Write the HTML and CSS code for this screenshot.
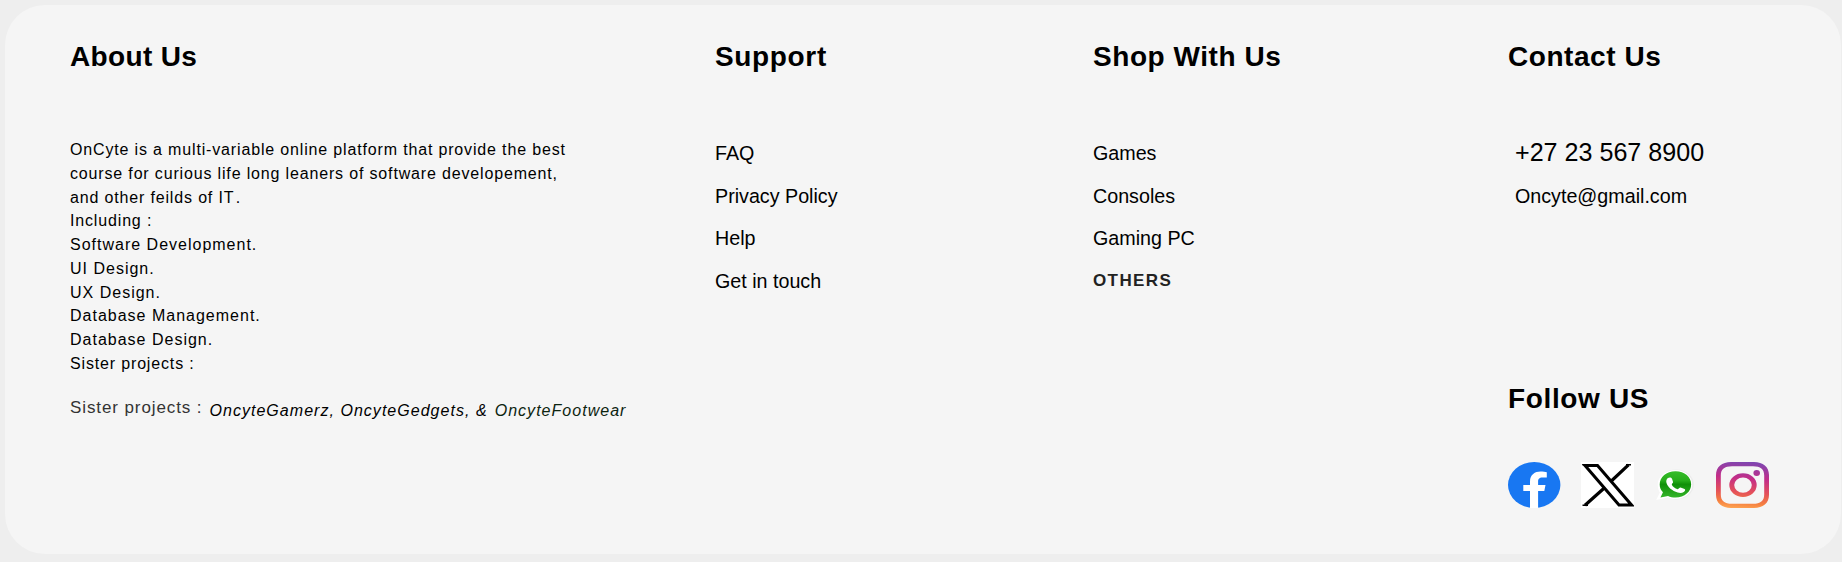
FILE: index.html
```html
<!DOCTYPE html>
<html lang="en">
<head>
<meta charset="utf-8">
<title>Oncyte</title>
<link rel="stylesheet" href="styles.css">
</head>
<body>
<footer class="footer">
  <section class="col">
    <h2 class="title title-about">About Us</h2>
    <p class="about">OnCyte is a multi-variable online platform that provide the best<br>course for curious life long leaners of software developement,<br>and other feilds of IT<span class="stop">.</span><br>Including :<br><span class="topics">Software Development.<br>UI Design.<br>UX Design.<br>Database Management.<br>Database Design.</span><br>Sister projects :</p>
    <div class="sisters">
      <span class="sisters-label">Sister projects :</span>
      <span class="sisters-list"><span>OncyteGamerz,</span><span>OncyteGedgets,</span><span>&amp;</span><span class="footwear">OncyteFootwear</span></span>
    </div>
  </section>
  <section class="col">
    <h2 class="title">Support</h2>
    <ul class="links">
      <li>FAQ</li><li>Privacy Policy</li><li>Help</li><li>Get in touch</li>
    </ul>
  </section>
  <section class="col">
    <h2 class="title title-shop">Shop With Us</h2>
    <ul class="links">
      <li>Games</li><li>Consoles</li><li>Gaming PC</li><li class="others">OTHERS</li>
    </ul>
  </section>
  <section class="col">
    <h2 class="title title-shop">Contact Us</h2>
    <ul class="links contact">
      <li class="phone">+27 23 567 8900</li><li class="mail">Oncyte@gmail.com</li>
    </ul>
    <h2 class="title follow">Follow US</h2>
    <div class="social">
      <svg class="icon" viewBox="0 0 53 46" preserveAspectRatio="none">
        <ellipse cx="26.2" cy="23" rx="26.2" ry="23" fill="#1877f2"/>
        <path d="M22 46V29h-6.700v-6H22v-3.500C22 12.500 27 9.500 32.500 9.500c2.500 0 5 .3 6.300.7v5.300h-4.200c-3.600 0-4.500 1.800-4.500 4V23h7.400l-1.200 6h-6.200v17z" fill="#fff"/>
      </svg>
      <svg class="icon" viewBox="0 0 53 46" preserveAspectRatio="none">
        <path fill="#fff" d="M0 0h53v46H0z"/>
        <path d="M4 3.500h12.500L50.500 43H38z" fill="#fff" stroke="#000" stroke-width="3"/>
        <path d="M47.500 2.800 29.800 19.500M23.300 26 4 43.300" fill="none" stroke="#000" stroke-width="3.200"/>
        <path d="M1.500 2.800H7M45 2.800h5M1.500 43.300H7" stroke="#000" stroke-width="1.500"/>
      </svg>
      <svg class="icon icon-wa" viewBox="1.500 0 39 46" preserveAspectRatio="none">
        <defs><linearGradient id="wa" x1="0" y1="0" x2="0" y2="1"><stop offset="0" stop-color="#35bd29"/><stop offset=".35" stop-color="#27ad1b"/><stop offset=".5" stop-color="#109008"/><stop offset="1" stop-color="#35b52a"/></linearGradient></defs>
        <ellipse cx="22" cy="22.500" rx="16.500" ry="15" fill="#ececec"/>
        <path d="M21.500 8C30.500 8 37 14.500 37 22.500S30.500 37 21.500 37c-2.500 0-5-.5-7-1.500L3.500 38l3.500-7.500c-1.500-2.300-2-5-2-8C5 14.500 12.500 8 21.500 8z" fill="#fff"/>
        <path d="M21.500 9.300C30 9.300 36 15 36 22.300s-6 13.200-14.500 13.200c-2.600 0-5-.6-7-1.600L7.500 35.500l2.300-5.200c-2-2.200-3-4.900-3-7.800C6.800 15 13 9.300 21.500 9.300z" fill="url(#wa)"/>
        <path d="M14.500 16c1.500-1 3.200-.5 3.700.8l1 3.200c.2 1-1.300 1.800-1.200 2.500.5 1.800 3 4 5.500 4.700.9.200 1.500-1.700 2.600-1.600l3.800 1.500c1 .6.500 2.200-.8 3-1.300.9-3.300 1.200-5.600.5-5-1.500-9.500-5.500-10.500-10-.4-2 .2-3.700 1.500-4.600z" fill="#fff"/>
      </svg>
      <svg class="icon" viewBox="0 0 53 46" preserveAspectRatio="none">
        <defs><linearGradient id="ig" x1=".55" y1="0" x2=".45" y2="1"><stop offset="0" stop-color="#7f45b0"/><stop offset=".35" stop-color="#c32d88"/><stop offset=".65" stop-color="#e4505a"/><stop offset=".88" stop-color="#f58040"/><stop offset="1" stop-color="#fda050"/></linearGradient></defs>
        <path fill-rule="evenodd" fill="url(#ig)" d="M15 0h23c9 0 15 5 15 13v20c0 8-6 13-15 13H15C6 46 0 41 0 33V13C0 5 6 0 15 0zm1 4.200C8.500 4.200 4.800 7 4.800 13.500v19c0 6.500 3.700 9.300 11.200 9.300h21c7.500 0 11.200-2.800 11.200-9.300v-19c0-6.500-3.700-9.300-11.200-9.300zM27 11.300a13.700 11.800 0 1 1 0 23.600 13.700 11.800 0 0 1 0-23.600zm0 4.200a8.800 7.600 0 1 0 0 15.200 8.800 7.600 0 0 0 0-15.200zM40.700 8.100a3.300 2.900 0 1 1 0 5.800 3.300 2.900 0 0 1 0-5.800z"/>
      </svg>
    </div>
  </section>
</footer>
</body>
</html>
```
FILE: styles.css
```css
body {
  margin: 0;
  padding: 5px 1px 8px 5px;
  height: 562px;
  box-sizing: border-box;
  background: #eee;
  font-family: Arial, "Liberation Sans", sans-serif;
  color: #000;
}

.footer {
  display: grid;
  grid-template-columns: 645px 378px 415px 1fr;
  align-items: start;
  height: 549px;
  box-sizing: border-box;
  padding: 36px 0 0 65px;
  border-radius: 40px;
  background: #f5f5f5;
  white-space: nowrap;
}

.title {
  margin: 0;
  font-size: 28px;
  line-height: 32px;
  letter-spacing: 0.65px;
}

.title-about {
  letter-spacing: 0.35px;
}

.title-shop {
  letter-spacing: 0.55px;
}

.about {
  margin: 65px 0 0;
  font-size: 16px;
  line-height: 23.75px;
  letter-spacing: 0.84px;
}

.topics {
  letter-spacing: 1px;
}

.stop {
  margin-left: 1.5px;
}

.sisters {
  display: flex;
  align-items: flex-start;
  gap: 7px;
  margin-top: 20.5px;
}

.sisters-label {
  width: 132.5px;
  font-size: 17px;
  line-height: 24px;
  letter-spacing: 0.9px;
  color: #333;
}

.sisters-list {
  display: flex;
  gap: 5.5px;
  padding-top: 3px;
  font-size: 16px;
  line-height: 24px;
  letter-spacing: 1.03px;
  font-style: italic;
}

.footwear {
  margin-left: 1.5px;
  color: #0c2410;
}

.links {
  margin: 59px 0 0;
  padding: 0;
  list-style: none;
  font-size: 19.7px;
  line-height: 42.7px;
}

.others {
  font-size: 17px;
  font-weight: bold;
  letter-spacing: 1.4px;
  color: #222;
}

.contact {
  padding-left: 7px;
}

.phone {
  height: 42.7px;
  font-size: 25.1px;
  line-height: 41px;
}

.follow {
  margin-top: 166px;
}

.social {
  display: flex;
  gap: 20px;
  margin-top: 47px;
}

.icon {
  display: block;
  width: 53px;
  height: 46px;
}

.icon-wa {
  width: 42px;
}
```
